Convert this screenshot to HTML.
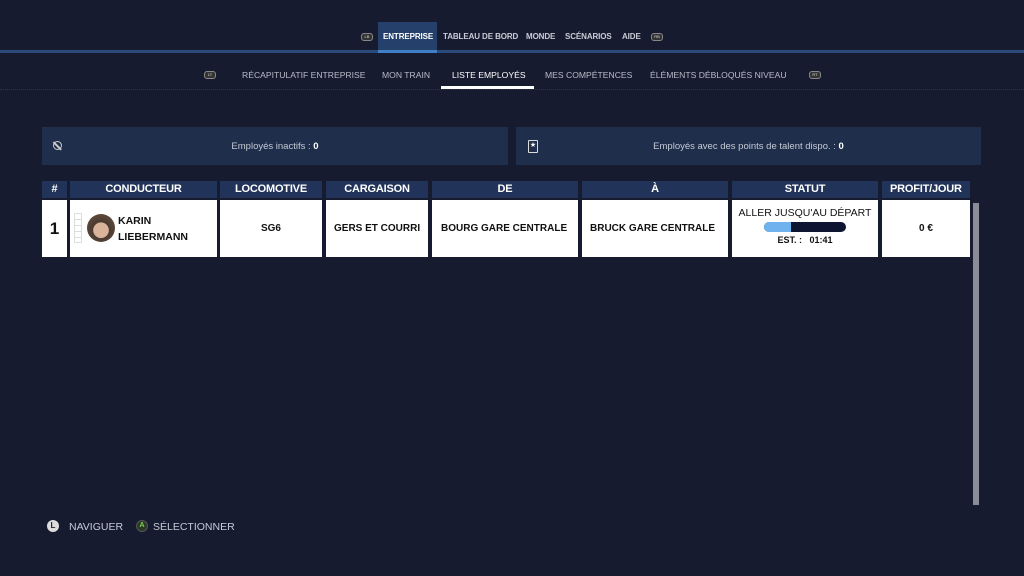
<!DOCTYPE html>
<html><head><meta charset="utf-8"><style>
*{margin:0;padding:0;box-sizing:border-box}
body{width:1024px;height:576px;background:#161b30;font-family:"Liberation Sans",sans-serif;color:#fff;position:relative;overflow:hidden}
.a{position:absolute;white-space:nowrap}
.t{font-weight:bold;font-size:8px;color:#c8ccd6;letter-spacing:-0.1px}
.btn{position:absolute;width:12px;height:8px;border:1px solid #888;border-radius:3px;background:#333;font-size:4px;color:#ddd;text-align:center;line-height:6px}
.sub{font-size:8.6px;color:#b8bcc8;top:70px}
.hd{position:absolute;top:181px;height:17px;background:#22335a;font-weight:bold;font-size:11px;letter-spacing:-0.2px;text-align:center;line-height:17px;overflow:hidden;white-space:nowrap}
.cl{position:absolute;top:200px;height:57px;background:#fff;color:#111;font-weight:bold;font-size:10px;text-align:center;display:flex;align-items:center;justify-content:center;overflow:hidden;white-space:nowrap}
.panel{position:absolute;top:127px;height:38px;background:#1f2e4b;font-size:9.5px;color:#c5cad6;text-align:center;padding-top:14px}
</style></head><body>
<div class="a" style="left:0;top:50px;width:1024px;height:3px;background:#2a4a7a"></div>
<div class="a" style="left:378px;top:22px;width:59px;height:29px;background:#25406a"></div>
<div class="a" style="left:378px;top:50px;width:59px;height:3px;background:#3f7fc8"></div>
<div class="btn" style="left:361px;top:33px">LB</div>
<div class="a t" style="left:383px;top:32px;color:#fff">ENTREPRISE</div>
<div class="a t" style="left:443px;top:32px">TABLEAU DE BORD</div>
<div class="a t" style="left:526px;top:32px">MONDE</div>
<div class="a t" style="left:565px;top:32px">SCÉNARIOS</div>
<div class="a t" style="left:622px;top:32px">AIDE</div>
<div class="btn" style="left:651px;top:33px">RB</div>
<div class="btn" style="left:204px;top:71px">LT</div>
<div class="a sub" style="left:242px">RÉCAPITULATIF ENTREPRISE</div>
<div class="a sub" style="left:382px">MON TRAIN</div>
<div class="a sub" style="left:452px;color:#fff">LISTE EMPLOYÉS</div>
<div class="a" style="left:441px;top:86px;width:93px;height:3px;background:#fff"></div>
<div class="a sub" style="left:545px">MES COMPÉTENCES</div>
<div class="a sub" style="left:650px">ÉLÉMENTS DÉBLOQUÉS NIVEAU</div>
<div class="btn" style="left:809px;top:71px">RT</div>
<div class="a" style="left:0;top:89px;width:1024px;border-top:1px dotted #2a3350"></div>

<div class="panel" style="left:42px;width:466px">Employés inactifs : <b style="color:#fff">0</b></div>
<div class="a" style="left:53px;top:141px;width:9px;height:9px;border:1.5px solid #ccc;border-radius:50%"></div>
<div class="a" style="left:52px;top:145px;width:11px;height:1.5px;background:#ccc;transform:rotate(45deg)"></div>
<div class="panel" style="left:516px;width:465px">Employés avec des points de talent dispo. : <b style="color:#fff">0</b></div>
<div class="a" style="left:528px;top:140px;width:10px;height:13px;border:1.5px solid #ddd;border-radius:1px;font-size:7px;line-height:10px;text-align:center">★</div>

<div class="hd" style="left:42px;width:25px">#</div>
<div class="hd" style="left:70px;width:147px">CONDUCTEUR</div>
<div class="hd" style="left:220px;width:102px">LOCOMOTIVE</div>
<div class="hd" style="left:326px;width:102px">CARGAISON</div>
<div class="hd" style="left:432px;width:146px">DE</div>
<div class="hd" style="left:582px;width:146px">À</div>
<div class="hd" style="left:732px;width:146px">STATUT</div>
<div class="hd" style="left:882px;width:88px;text-align:left;padding-left:8px">PROFIT/JOUR</div>

<div class="cl" style="left:42px;width:25px;font-size:17px">1</div>
<div class="cl" style="left:70px;width:147px;justify-content:flex-start;padding-left:48px;text-align:left;line-height:16px;font-size:10.5px">KARIN<br>LIEBERMANN</div>
<div class="a" style="left:74px;top:213px;width:8px;height:30px;border:1px solid #ddd;background:repeating-linear-gradient(#fff 0 5px,#ddd 5px 6px)"></div>
<div class="a" style="left:87px;top:214px;width:28px;height:28px;border-radius:50%;background:radial-gradient(circle at 50% 58%,#d9b49a 0 35%,#4a3a30 38%,#6a5444 100%)"></div>
<div class="cl" style="left:220px;width:102px">SG6</div>
<div class="cl" style="left:326px;width:102px;justify-content:flex-start;padding-left:8px">GERS ET COURRI</div>
<div class="cl" style="left:432px;width:146px;justify-content:flex-start;padding-left:9px">BOURG GARE CENTRALE</div>
<div class="cl" style="left:582px;width:146px;justify-content:flex-start;padding-left:8px">BRUCK GARE CENTRALE</div>
<div class="cl" style="left:732px;width:146px;flex-direction:column;justify-content:flex-start;padding-top:7px;font-weight:normal;font-size:10.5px">ALLER JUSQU'AU DÉPART
<div style="width:82px;height:10px;border-radius:5px;background:#0e1530;margin-top:3px;overflow:hidden"><div style="width:27px;height:10px;background:#6fb3ee"></div></div>
<div style="font-weight:bold;font-size:9px;margin-top:3px">EST. : &nbsp; 01:41</div></div>
<div class="cl" style="left:882px;width:88px">0 €</div>
<div class="a" style="left:973px;top:203px;width:6px;height:302px;background:#8a8d96"></div>

<div class="a" style="left:47px;top:520px;width:12px;height:12px;border-radius:50%;background:#ddd;color:#222;font-size:8px;font-weight:bold;text-align:center;line-height:12px">L</div>
<div class="a" style="left:69px;top:521px;font-size:10.5px;color:#c5cad6">NAVIGUER</div>
<div class="a" style="left:136px;top:520px;width:12px;height:12px;border-radius:50%;background:#2a3a2a;border:1px solid #555;color:#7ed04a;font-size:7px;font-weight:bold;text-align:center;line-height:10px">A</div>
<div class="a" style="left:153px;top:521px;font-size:10.5px;color:#c5cad6">SÉLECTIONNER</div>
</body></html>
